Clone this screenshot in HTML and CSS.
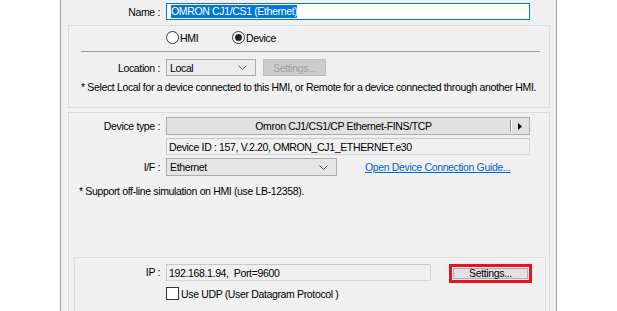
FILE: index.html
```html
<!DOCTYPE html>
<html>
	<head>
		<meta charset="utf-8">
		<title>Device Properties</title>
		<link rel="stylesheet" href="styles.css">
	</head>
	<body>
		<div id="dialog">
			<div class="row name-row">
				<span class="lbl">Name :</span>
				<div class="name-input"><span class="sel">OMRON CJ1/CS1 (Ethernet)</span></div>
			</div>

			<div class="group" id="group-hmi">
				<div class="radios">
					<span class="radio"></span><span class="radio-text">HMI</span>
					<span class="radio checked"></span><span class="radio-text">Device</span>
				</div>
				<div class="sep"></div>
				<div class="row">
					<span class="lbl">Location :</span>
					<div class="combo loc-combo">
						<span>Local</span>
						<svg class="chev" width="9" height="5" viewBox="0 0 9 5"><polyline points="0.5,0.5 4.5,4.5 8.5,0.5" fill="none" stroke="#555" stroke-width="1"/></svg>
					</div>
					<button type="button" class="btn disabled">Settings...</button>
				</div>
				<div class="note">* Select Local for a device connected to this HMI, or Remote for a device connected through another HMI.</div>
			</div>

			<div class="group" id="group-device">
				<div class="row tall">
					<span class="lbl">Device type :</span>
					<div class="type-btn">
						<span class="type-text">Omron CJ1/CS1/CP Ethernet-FINS/TCP</span>
						<span class="type-div"></span>
						<svg class="type-arrow" width="4" height="7" viewBox="0 0 4 7"><polygon points="0,0 4,3.5 0,7" fill="#000"/></svg>
					</div>
				</div>
				<div class="row">
					<span class="lbl"></span>
					<div class="field id-field">Device ID : 157, V.2.20, OMRON_CJ1_ETHERNET.e30</div>
				</div>
				<div class="row tall if-row">
					<span class="lbl">I/F :</span>
					<div class="combo if-combo">
						<span>Ethernet</span>
						<svg class="chev" width="9" height="5" viewBox="0 0 9 5"><polyline points="0.5,0.5 4.5,4.5 8.5,0.5" fill="none" stroke="#555" stroke-width="1"/></svg>
					</div>
					<a class="guide" href="#">Open Device Connection Guide...</a>
				</div>
				<div class="note">* Support off-line simulation on HMI (use LB-12358).</div>

				<div class="group" id="group-ip">
					<div class="row ip-row">
						<span class="lbl">IP :</span>
						<div class="field ip-field">192.168.1.94,&nbsp; Port=9600</div>
						<div class="mark">
							<button type="button" class="btn">Settings...</button>
						</div>
					</div>
					<div class="check-row">
						<span class="check"></span><span>Use UDP (User Datagram Protocol )</span>
					</div>
				</div>
			</div>
		</div>
	</body>
</html>
```

FILE: styles.css
```css
html {
	height: 100%;
}

body {
	margin: 0;
	height: 100%;
	background-color: #ffffff;
	font-family: "Liberation Sans", Arial, sans-serif;
	font-size: 10.5px;
	letter-spacing: -0.35px;
	color: #000;
	overflow: hidden;
}

#dialog {
	margin-left: 60px;
	width: 497px;
	height: 311px;
	box-sizing: border-box;
	padding: 3px 0 0 7px;
	background-color: #f0f0f0;
	border-left: 1px solid #a0a0a0;
	border-right: 1px solid #a0a0a0;
	overflow: hidden;
}

.row {
	display: flex;
	align-items: center;
	height: 17px;
}

.row.tall {
	height: 18px;
}

.lbl {
	width: 91px;
	margin-right: 6px;
	text-align: right;
	flex: none;
}

.name-row .lbl {
	width: 92px;
}

.name-input {
	width: 364px;
	height: 17px;
	box-sizing: border-box;
	border: 1px solid #0078d7;
	background-color: #fff;
	padding-left: 4px;
	display: flex;
	align-items: center;
}

.sel {
	background-color: #0078d7;
	color: #fff;
	line-height: 13px;
}

/* group boxes */
.group {
	width: 482px;
	box-sizing: border-box;
	border: 1px solid #dcdcdc;
}

#group-hmi {
	margin-top: 5px;
	height: 83px;
	padding-top: 5px;
}

#group-device {
	margin-top: 4px;
	height: 220px;
	padding-top: 4px;
}

#group-ip {
	margin: 59px 0 0 5px;
	width: 472px;
	height: 60px;
	padding-top: 6px;
	border-right-color: #e4e4e4;
}

#group-ip .lbl {
	width: 85px;
}

.radios {
	display: flex;
	align-items: center;
	height: 13px;
	padding-left: 97px;
}

.radio {
	width: 13px;
	height: 13px;
	box-sizing: border-box;
	border: 1px solid #333;
	border-radius: 50%;
	background-color: #fff;
	display: flex;
	align-items: center;
	justify-content: center;
}

.radio.checked::after {
	content: "";
	width: 7px;
	height: 7px;
	border-radius: 50%;
	background-color: #222;
}

.radio-text {
	margin-left: 1px;
	width: 52px;
}

.sep {
	margin: 7px 0 7px 12px;
	width: 459px;
	height: 1px;
	background-color: #a0a0a0;
}

.combo {
	height: 17px;
	box-sizing: border-box;
	border: 1px solid #acacac;
	background-color: #e8e8e8;
	display: flex;
	align-items: center;
	justify-content: space-between;
	padding: 0 8px 0 3px;
}

.loc-combo {
	width: 90px;
	background-color: #ececec;
}

.if-combo {
	width: 171px;
	height: 18px;
	background-color: #e5e5e5;
}

.btn {
	font-family: "Liberation Sans", Arial, sans-serif;
	font-size: 10.5px;
	letter-spacing: -0.35px;
	height: 17px;
	padding: 0;
	border: 1px solid #adadad;
	background-color: #e1e1e1;
	color: #000;
}

.btn.disabled {
	margin-left: 7px;
	width: 63px;
	border-color: #bfbfbf;
	background-color: #cccccc;
	color: #a0a0a0;
}

.note {
	margin-top: 5px;
	padding-left: 12px;
	line-height: 13px;
	white-space: nowrap;
}

#group-device .note {
	margin-top: 9px;
	padding-left: 10px;
}

.type-btn {
	width: 364px;
	height: 18px;
	box-sizing: border-box;
	border: 1px solid #adadad;
	background-color: #e1e1e1;
	display: flex;
	align-items: center;
}

.type-text {
	flex: 1;
	text-align: center;
	padding-left: 10px;
}

.type-div {
	width: 1px;
	height: 12px;
	background-color: #8a8a8a;
	border-right: 1px solid #fff;
	margin-right: 6px;
}

.type-arrow {
	margin-right: 7px;
}

.field {
	height: 17px;
	box-sizing: border-box;
	border: 1px solid #d6d6d6;
	border-top-color: #c8c8c8;
	border-left-color: #c8c8c8;
	background-color: #f0f0f0;
	padding-left: 2px;
	display: flex;
	align-items: center;
}

.id-field {
	width: 364px;
	margin-top: 6px;
}

.if-row {
	margin-top: 6px;
}

.guide {
	margin-left: 28px;
	color: #0066cc;
	text-decoration: underline;
}

.ip-row {
	align-items: flex-start;
	height: 19px;
}

.ip-row .lbl {
	line-height: 17px;
}

.ip-field {
	width: 265px;
}

.mark {
	margin-left: 18px;
	width: 83px;
	height: 19px;
	box-sizing: border-box;
	border: 3px solid #e8141d;
	padding: 1px;
	display: flex;
}

.mark .btn {
	width: 100%;
	height: 100%;
	line-height: 9px;
}

.check-row {
	display: flex;
	align-items: center;
	margin: 4px 0 0 91px;
	height: 13px;
}

.check {
	width: 13px;
	height: 13px;
	box-sizing: border-box;
	border: 1px solid #333;
	background-color: #fff;
	margin-right: 2px;
}
```
